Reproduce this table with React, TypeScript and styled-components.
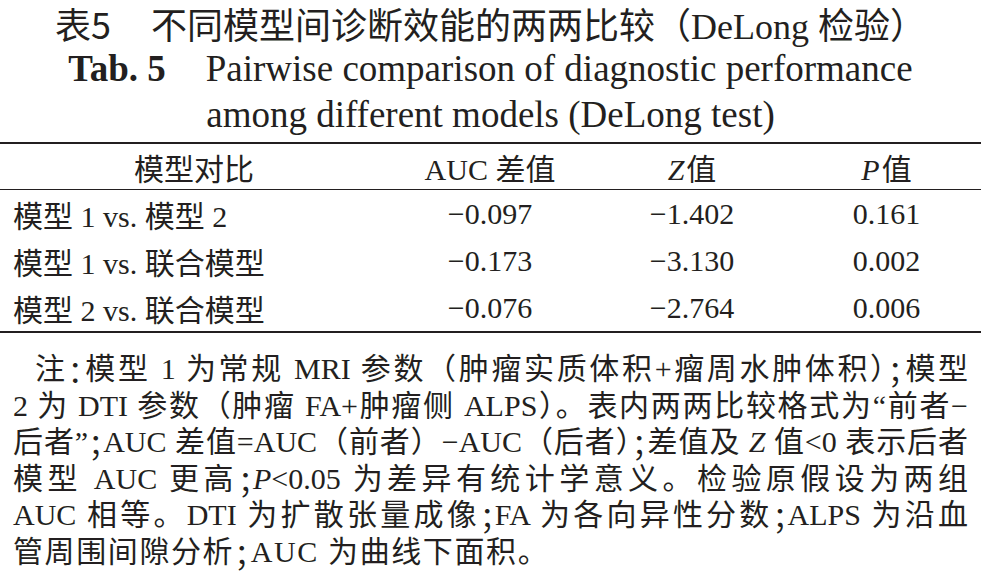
import React from 'react'
import styled, { createGlobalStyle } from 'styled-components'

const GlobalStyle = createGlobalStyle`
  html,
  body {
    margin: 0;
    padding: 0;
    background: #ffffff;
  }

  body {
    font-family: 'Liberation Serif', 'Noto Sans CJK SC', serif;
    color: #231f20;
  }
`

const Page = styled.div`
  width: 981px;
  height: 588px;
  overflow: hidden;
`

const Caption = styled.div`
  text-align: center;
`

const CaptionLine = styled.div<{ $size: number }>`
  font-size: ${(p) => p.$size}px;
  line-height: 46px;
  height: 46px;
  white-space: nowrap;
`

const CaptionLabel = styled.span<{ $bold?: boolean }>`
  font-family: ${(p) =>
    p.$bold ? "'Liberation Serif', serif" : "'Noto Sans CJK SC', sans-serif"};
  font-weight: ${(p) => (p.$bold ? 700 : 400)};
  margin-right: 40px;
`

const Table = styled.div`
  margin-top: 4px;
  border-top: 2px solid #231f20;
  border-bottom: 2px solid #231f20;
  font-size: 30px;
`

const Row = styled.div<{ $head?: boolean }>`
  display: grid;
  grid-template-columns: 388px 204px 200px 189px;
  align-items: center;
  height: ${(p) => (p.$head ? '45px' : '47px')};
  border-bottom: ${(p) => (p.$head ? '1px solid #231f20' : 'none')};
`

const Cell = styled.div<{ $left?: boolean }>`
  text-align: ${(p) => (p.$left ? 'left' : 'center')};
  padding-left: ${(p) => (p.$left ? '13px' : '0')};
  white-space: nowrap;
`

const Var = styled.i`
  margin-right: 2px;
`

const Notes = styled.div`
  margin-top: 18px;
  padding: 0 13px;
  font-size: 30px;
  line-height: 36.6px;
`

const NoteLine = styled.div<{ $indent?: boolean; $last?: boolean }>`
  height: 36.6px;
  text-align: justify;
  text-align-last: ${(p) => (p.$last ? 'left' : 'justify')};
  text-indent: ${(p) => (p.$indent ? '22px' : '0')};
  letter-spacing: ${(p) => (p.$last ? '1.6px' : '0')};
`

const Half = styled.span`
  font-family: 'Noto Sans CJK SC', sans-serif;
  font-feature-settings: 'halt';
  vertical-align: top;
`

const rows = [
  { name: '模型 1 vs. 模型 2', diff: '−0.097', z: '−1.402', p: '0.161' },
  { name: '模型 1 vs. 联合模型', diff: '−0.173', z: '−3.130', p: '0.002' },
  { name: '模型 2 vs. 联合模型', diff: '−0.076', z: '−2.764', p: '0.006' },
]

const App = () => {
  return (
    <Page>
      <GlobalStyle />
      <Caption>
        <CaptionLine $size={36}>
          <CaptionLabel>表5</CaptionLabel>
          不同模型间诊断效能的两两比较（DeLong 检验）
        </CaptionLine>
        <CaptionLine $size={37}>
          <CaptionLabel $bold>Tab. 5</CaptionLabel>
          Pairwise comparison of diagnostic performance
        </CaptionLine>
        <CaptionLine $size={37}>among different models (DeLong test)</CaptionLine>
      </Caption>

      <Table>
        <Row $head>
          <Cell>模型对比</Cell>
          <Cell>AUC 差值</Cell>
          <Cell>
            <Var>Z</Var>值
          </Cell>
          <Cell>
            <Var>P</Var>值
          </Cell>
        </Row>
        {rows.map((r) => (
          <Row key={r.name}>
            <Cell $left>{r.name}</Cell>
            <Cell>{r.diff}</Cell>
            <Cell>{r.z}</Cell>
            <Cell>{r.p}</Cell>
          </Row>
        ))}
      </Table>

      <Notes>
        <NoteLine $indent>
          注<Half>：</Half>模型 1 为常规 MRI 参数（肿瘤实质体积+瘤周水肿体积）<Half>；</Half>模型
        </NoteLine>
        <NoteLine>2 为 DTI 参数（肿瘤 FA+肿瘤侧 ALPS）。表内两两比较格式为“前者−</NoteLine>
        <NoteLine>
          后者”<Half>；</Half>AUC 差值=AUC（前者）−AUC（后者）<Half>；</Half>差值及 <i>Z</i> 值&lt;0 表示后者
        </NoteLine>
        <NoteLine>
          模型 AUC 更高<Half>；</Half>
          <i>P</i>&lt;0.05 为差异有统计学意义。检验原假设为两组
        </NoteLine>
        <NoteLine>
          AUC 相等。DTI 为扩散张量成像<Half>；</Half>FA 为各向异性分数<Half>；</Half>ALPS 为沿血
        </NoteLine>
        <NoteLine $last>
          管周围间隙分析<Half>；</Half>AUC 为曲线下面积。
        </NoteLine>
      </Notes>
    </Page>
  )
}

export default App
